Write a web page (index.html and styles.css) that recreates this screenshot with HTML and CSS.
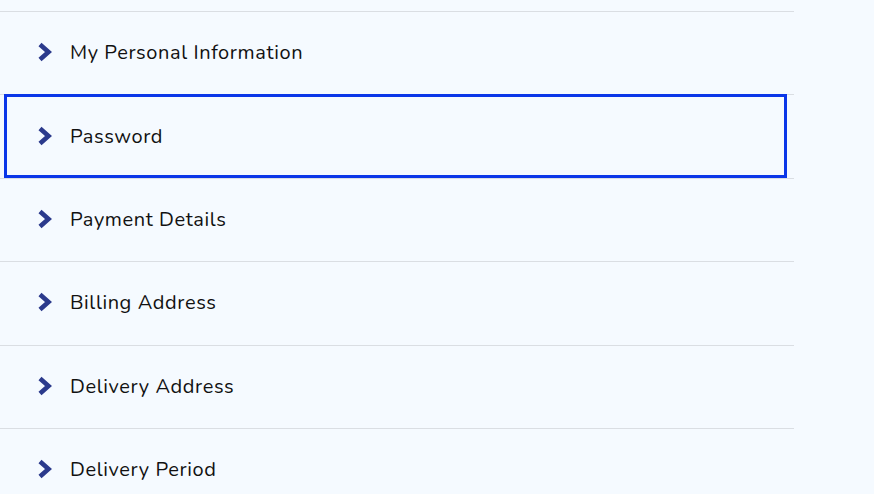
FILE: index.html
```html
<!DOCTYPE html>
<html lang="en">
<head>
<meta charset="utf-8">
<title>Account</title>
<link rel="stylesheet" href="styles.css">
</head>
<body>
<ul class="menu">
  <li class="row"><a class="item" href="#"><svg class="chev" viewBox="0 0 15 20"><polyline points="3,2.5 11.5,10 3,17.5"/></svg><span>My Personal Information</span></a></li>
  <li class="row"><a class="item focused" href="#"><svg class="chev" viewBox="0 0 15 20"><polyline points="3,2.5 11.5,10 3,17.5"/></svg><span>Password</span></a></li>
  <li class="row"><a class="item" href="#"><svg class="chev" viewBox="0 0 15 20"><polyline points="3,2.5 11.5,10 3,17.5"/></svg><span>Payment Details</span></a></li>
  <li class="row"><a class="item" href="#"><svg class="chev" viewBox="0 0 15 20"><polyline points="3,2.5 11.5,10 3,17.5"/></svg><span>Billing Address</span></a></li>
  <li class="row"><a class="item" href="#"><svg class="chev" viewBox="0 0 15 20"><polyline points="3,2.5 11.5,10 3,17.5"/></svg><span>Delivery Address</span></a></li>
  <li class="row"><a class="item" href="#"><svg class="chev" viewBox="0 0 15 20"><polyline points="3,2.5 11.5,10 3,17.5"/></svg><span>Delivery Period</span></a></li>
</ul>
</body>
</html>
```
FILE: styles.css
```css
html, body {
  margin: 0;
  padding: 0;
  background: #f5faff;
  height: 100%;
  overflow: hidden;
}
body {
  font-family: "Nunito", "Lato", "Noto Sans", sans-serif;
  color: #111111;
}
.menu {
  list-style: none;
  margin: 0;
  padding: 11px 0 0 0;
  width: 794px;
}
.row {
  border-top: 1px solid #dadee3;
  height: 82.4px;
}
.item {
  position: relative;
  display: flex;
  align-items: center;
  height: 100%;
  padding-left: 37px;
  gap: 18px;
  color: #111111;
  text-decoration: none;
  font-size: 20px;
  letter-spacing: 0.6px;
}
.item span {
  margin-top: -1px;
}
.chev {
  width: 15px;
  height: 20px;
  margin-top: -2px;
}
.chev polyline {
  fill: none;
  stroke: #2b3a8c;
  stroke-width: 4.6;
  stroke-linejoin: miter;
}
.focused::after {
  content: "";
  position: absolute;
  top: -1px;
  left: 4px;
  right: 7px;
  bottom: 0;
  border: 3px solid #0a36e8;
}
```
